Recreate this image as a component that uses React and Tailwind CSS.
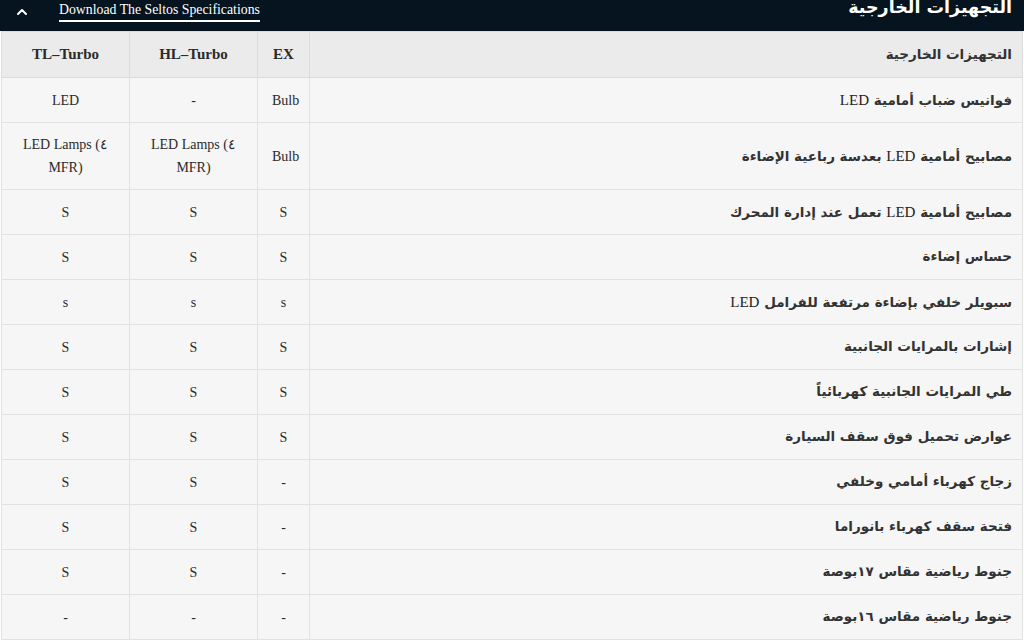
import { ChevronUp } from 'lucide-react';

const rows = [
  ['فوانيس ضباب أمامية LED', 'Bulb', '-', 'LED'],
  ['مصابيح أمامية LED بعدسة رباعية الإضاءة', 'Bulb', 'LED Lamps (٤ MFR)', 'LED Lamps (٤ MFR)'],
  ['مصابيح أمامية LED تعمل عند إدارة المحرك', 'S', 'S', 'S'],
  ['حساس إضاءة', 'S', 'S', 'S'],
  ['سبويلر خلفي بإضاءة مرتفعة للفرامل LED', 's', 's', 's'],
  ['إشارات بالمرايات الجانبية', 'S', 'S', 'S'],
  ['طي المرايات الجانبية كهربائياً', 'S', 'S', 'S'],
  ['عوارض تحميل فوق سقف السيارة', 'S', 'S', 'S'],
  ['زجاج كهرباء أمامي وخلفي', '-', 'S', 'S'],
  ['فتحة سقف كهرباء بانوراما', '-', 'S', 'S'],
  ['جنوط رياضية مقاس ١٧بوصة', '-', 'S', 'S'],
  ['جنوط رياضية مقاس ١٦بوصة', '-', '-', '-'],
];

const serif = "font-['Liberation_Serif',serif]";
const arabic = "font-['DejaVu_Sans',sans-serif]";

// latin words (LED) stay in the serif face, arabic in the sans one
function Label({ text }) {
  const parts = text.split(/(LED)/);
  return parts.map((p, i) =>
    p === 'LED' ? (
      <span key={i} className={`${serif} text-[15px] font-normal text-[#222]`}>LED</span>
    ) : (
      <span key={i} className={`${arabic} font-bold`}>{p}</span>
    )
  );
}

export default function App() {
  return (
    <div className={`w-[1024px] h-[642px] overflow-hidden bg-white ${serif}`}>
      <div className="h-[31px] bg-[#05141f] flex items-start justify-between pl-[14px] pr-[12px] overflow-hidden">
        <div className="flex items-center gap-[29px] pt-[1px]">
          <ChevronUp className="w-[16px] h-[16px] text-white" strokeWidth={3} />
          <span className="text-white text-[13.8px] leading-[18px] border-b-2 border-white pb-[1px]">
            Download The Seltos Specifications
          </span>
        </div>
        <h2 dir="rtl" className={`text-white text-[17.5px] font-bold leading-none -mt-[1px] ${arabic}`}>
          التجهيزات الخارجية
        </h2>
      </div>
      <table dir="rtl" className="ml-[1px] w-[1021px] border-collapse table-fixed text-[#2a2a2a]">
        <colgroup>
          <col className="w-[713px]" />
          <col className="w-[52px]" />
          <col className="w-[128px]" />
          <col className="w-[128px]" />
        </colgroup>
        <thead>
          <tr className="h-[46px] bg-[#ebebeb]">
            <th className={`border border-[#dcdcdc] text-right pr-[10px] text-[13.5px] font-bold text-[#333] ${arabic}`}>
              التجهيزات الخارجية
            </th>
            <th className="border border-[#dcdcdc] text-center text-[15px] font-bold">EX</th>
            <th className="border border-[#dcdcdc] text-center text-[15px] font-bold">HL–Turbo</th>
            <th className="border border-[#dcdcdc] text-center text-[15px] font-bold">TL–Turbo</th>
          </tr>
        </thead>
        <tbody>
          {rows.map((r, i) => (
            <tr key={i} className={`${i === 1 ? 'h-[67px]' : 'h-[45px]'} bg-[#f6f6f6]`}>
              <td className="border border-[#e2e2e2] text-right pr-[10px] text-[13.5px] text-[#333]">
                <Label text={r[0]} />
              </td>
              {r.slice(1).map((v, j) => (
                <td key={j} dir="ltr" className="border border-[#e2e2e2] text-center text-[14px] leading-[23px] px-[14px]">
                  {v}
                </td>
              ))}
            </tr>
          ))}
        </tbody>
      </table>
    </div>
  );
}
